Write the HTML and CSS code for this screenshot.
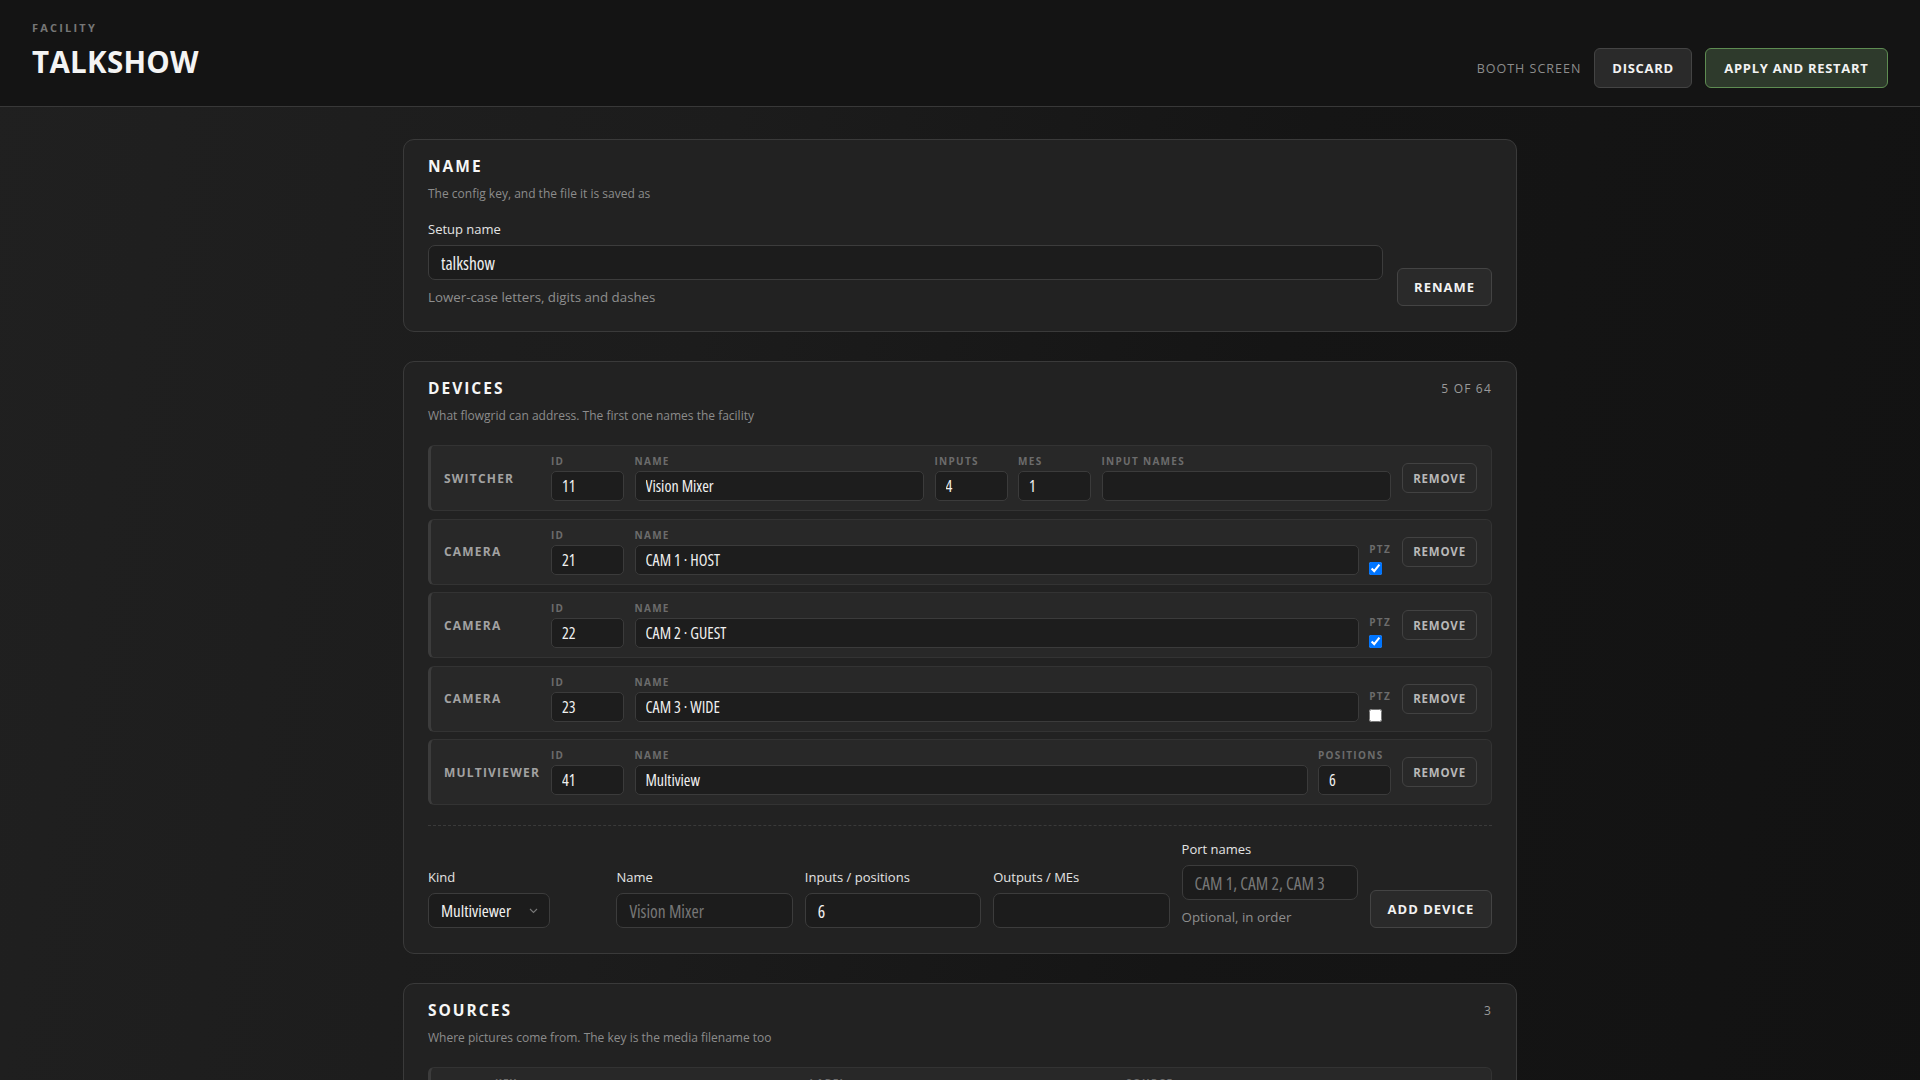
FILE: index.html
```html
<!DOCTYPE html>
<html lang="en">
<head>
<meta charset="utf-8">
<title>Talkshow — Facility</title>
<link rel="stylesheet" href="styles.css">
</head>
<body>
<header class="topbar">
  <div class="brand">
    <div class="eyebrow">FACILITY</div>
    <h1 class="title">TALKSHOW</h1>
  </div>
  <div class="actions">
    <span class="booth">BOOTH SCREEN</span>
    <button class="btn btn-lg">DISCARD</button>
    <button class="btn btn-lg btn-primary">APPLY AND RESTART</button>
  </div>
</header>

<main class="content">
  <section class="card">
    <div class="card-head"><h2 class="card-title">NAME</h2></div>
    <p class="card-sub">The config key, and the file it is saved as</p>
    <div class="rename">
      <div class="field grow">
        <label class="flabel">Setup name</label>
        <input class="input" value="talkshow">
        <div class="hint">Lower-case letters, digits and dashes</div>
      </div>
      <button class="btn btn-md">RENAME</button>
    </div>
  </section>

  <section class="card">
    <div class="card-head"><h2 class="card-title">DEVICES</h2><span class="count">5 OF 64</span></div>
    <p class="card-sub">What flowgrid can address. The first one names the facility</p>
    <div class="dev-list">
      <div class="dev">
        <div class="dev-kind">SWITCHER</div>
        <div class="dev-fields">
          <div class="df sm"><span class="dl">ID</span><input class="input in-sm" value="11"></div>
          <div class="df grow"><span class="dl">NAME</span><input class="input in-sm" value="Vision Mixer"></div>
          <div class="df sm"><span class="dl">INPUTS</span><input class="input in-sm" value="4"></div>
          <div class="df sm"><span class="dl">MES</span><input class="input in-sm" value="1"></div>
          <div class="df grow"><span class="dl">INPUT NAMES</span><input class="input in-sm" value=""></div>
        </div>
        <button class="btn btn-sm">REMOVE</button>
      </div>
      <div class="dev">
        <div class="dev-kind">CAMERA</div>
        <div class="dev-fields">
          <div class="df sm"><span class="dl">ID</span><input class="input in-sm" value="21"></div>
          <div class="df grow"><span class="dl">NAME</span><input class="input in-sm" value="CAM 1 · HOST"></div>
          <div class="df check"><span class="dl">PTZ</span><input type="checkbox" class="cb" checked></div>
        </div>
        <button class="btn btn-sm">REMOVE</button>
      </div>
      <div class="dev">
        <div class="dev-kind">CAMERA</div>
        <div class="dev-fields">
          <div class="df sm"><span class="dl">ID</span><input class="input in-sm" value="22"></div>
          <div class="df grow"><span class="dl">NAME</span><input class="input in-sm" value="CAM 2 · GUEST"></div>
          <div class="df check"><span class="dl">PTZ</span><input type="checkbox" class="cb" checked></div>
        </div>
        <button class="btn btn-sm">REMOVE</button>
      </div>
      <div class="dev">
        <div class="dev-kind">CAMERA</div>
        <div class="dev-fields">
          <div class="df sm"><span class="dl">ID</span><input class="input in-sm" value="23"></div>
          <div class="df grow"><span class="dl">NAME</span><input class="input in-sm" value="CAM 3 · WIDE"></div>
          <div class="df check"><span class="dl">PTZ</span><input type="checkbox" class="cb"></div>
        </div>
        <button class="btn btn-sm">REMOVE</button>
      </div>
      <div class="dev">
        <div class="dev-kind">MULTIVIEWER</div>
        <div class="dev-fields">
          <div class="df sm"><span class="dl">ID</span><input class="input in-sm" value="41"></div>
          <div class="df grow"><span class="dl">NAME</span><input class="input in-sm" value="Multiview"></div>
          <div class="df sm"><span class="dl">POSITIONS</span><input class="input in-sm" value="6"></div>
        </div>
        <button class="btn btn-sm">REMOVE</button>
      </div>
    </div>

    <div class="add">
      <div class="field">
        <label class="flabel">Kind</label>
        <div class="select"><span>Multiviewer</span>
          <svg class="chev" width="9" height="6" viewBox="0 0 9 6"><path d="M1 1 L4.5 4.5 L8 1" fill="none" stroke="#777" stroke-width="1.1"/></svg>
        </div>
      </div>
      <div class="field">
        <label class="flabel">Name</label>
        <input class="input" placeholder="Vision Mixer">
      </div>
      <div class="field">
        <label class="flabel">Inputs / positions</label>
        <input class="input" value="6">
      </div>
      <div class="field">
        <label class="flabel">Outputs / MEs</label>
        <input class="input" value="">
      </div>
      <div class="field">
        <label class="flabel">Port names</label>
        <input class="input" placeholder="CAM 1, CAM 2, CAM 3">
        <div class="hint hint-add">Optional, in order</div>
      </div>
      <button class="btn btn-md btn-add">ADD DEVICE</button>
    </div>
  </section>

  <section class="card">
    <div class="card-head"><h2 class="card-title">SOURCES</h2><span class="count">3</span></div>
    <p class="card-sub">Where pictures come from. The key is the media filename too</p>
    <div class="dev-list">
      <div class="dev src">
        <div class="dev-kind">1</div>
        <div class="dev-fields">
          <div class="df key"><span class="dl">KEY</span><input class="input in-sm" value="cam1"></div>
          <div class="df label"><span class="dl">LABEL</span><input class="input in-sm" value="Host"></div>
          <div class="df grow"><span class="dl">SOURCE</span><input class="input in-sm" value="CAM 1 · HOST"></div>
        </div>
        <button class="btn btn-sm">REMOVE</button>
      </div>
      <div class="dev src">
        <div class="dev-kind">2</div>
        <div class="dev-fields">
          <div class="df key"><span class="dl">KEY</span><input class="input in-sm" value="cam2"></div>
          <div class="df label"><span class="dl">LABEL</span><input class="input in-sm" value="Guest"></div>
          <div class="df grow"><span class="dl">SOURCE</span><input class="input in-sm" value="CAM 2 · GUEST"></div>
        </div>
        <button class="btn btn-sm">REMOVE</button>
      </div>
      <div class="dev src">
        <div class="dev-kind">3</div>
        <div class="dev-fields">
          <div class="df key"><span class="dl">KEY</span><input class="input in-sm" value="cam3"></div>
          <div class="df label"><span class="dl">LABEL</span><input class="input in-sm" value="Wide"></div>
          <div class="df grow"><span class="dl">SOURCE</span><input class="input in-sm" value="CAM 3 · WIDE"></div>
        </div>
        <button class="btn btn-sm">REMOVE</button>
      </div>
    </div>
  </section>
</main>
</body>
</html>
```

FILE: styles.css
```css
* { box-sizing: border-box; }

html, body {
  margin: 0;
  padding: 0;
}

body {
  font-family: "Open Sans", "Noto Sans", "DejaVu Sans", sans-serif;
  color: #e6e6e6;
  background: linear-gradient(100deg, #202020 0%, #1c1c1c 35%, #151515 62%, #121212 100%);
  min-height: 100vh;
}

button, input {
  font-family: inherit;
}

/* ---------- top bar ---------- */
.topbar {
  height: 107px;
  display: flex;
  justify-content: space-between;
  padding: 21px 32px 18px;
  background: #141414;
  border-bottom: 1px solid #383838;
}

.brand {
  display: flex;
  flex-direction: column;
}

.eyebrow {
  font-size: 11px;
  line-height: 14px;
  font-weight: 700;
  letter-spacing: 2.2px;
  color: #767676;
}

.title {
  margin: 10px 0 0;
  font-size: 29.5px;
  line-height: 34px;
  font-weight: 700;
  letter-spacing: 0.3px;
  color: #f4f4f4;
}

.actions {
  align-self: flex-end;
  display: flex;
  align-items: center;
  gap: 13px;
}

.booth {
  font-size: 12.5px;
  letter-spacing: 1px;
  color: #8c8c8c;
}

/* ---------- buttons ---------- */
.btn {
  display: inline-flex;
  align-items: center;
  justify-content: center;
  white-space: nowrap;
  background: #2a2a2a;
  border: 1px solid #444;
  border-radius: 6px;
  color: #f2f2f2;
  font-weight: 700;
  letter-spacing: 1px;
  cursor: pointer;
}

.btn-lg {
  height: 40px;
  padding: 0 17px;
  font-size: 13px;
  letter-spacing: 0.7px;
}

.btn-primary {
  padding: 0 18.5px;
  background: #2e3a2c;
  border-color: #5e8c52;
}

.btn-md {
  height: 38px;
  padding: 0 16px;
  font-size: 13px;
}

.btn-sm {
  height: 30px;
  width: 75px;
  padding: 0;
  font-size: 11.5px;
  letter-spacing: 0.8px;
  color: #b8b8b8;
  background: #292929;
  border-color: #424242;
}

/* ---------- content ---------- */
.content {
  width: 1114px;
  margin: 0 auto;
  padding: 32px 0 48px;
  display: flex;
  flex-direction: column;
  gap: 29px;
}

.card {
  background: #222222;
  border: 1px solid #3a3a3a;
  border-radius: 11px;
  padding: 16px 24px 25px;
}

.card-head {
  display: flex;
  justify-content: space-between;
  align-items: center;
}

.card-title {
  margin: 0;
  font-size: 15.5px;
  line-height: 20px;
  font-weight: 700;
  letter-spacing: 2px;
  color: #f6f6f6;
}

.count {
  font-size: 12px;
  letter-spacing: 1.2px;
  color: #9a9a9a;
}

.card-sub {
  margin: 10px 0 21px;
  font-size: 12px;
  line-height: 16px;
  color: #8c8c8c;
}

/* ---------- generic fields ---------- */
.field {
  display: flex;
  flex-direction: column;
  min-width: 0;
}

.grow { flex: 1 1 0; min-width: 0; }

.flabel {
  font-size: 13px;
  line-height: 18px;
  color: #e4e4e4;
  margin-bottom: 7px;
}

.input {
  width: 100%;
  height: 35px;
  padding: 0 12px;
  background: #1c1c1c;
  border: 1px solid #3c3c3c;
  border-radius: 7px;
  color: #f0f0f0;
  font-size: 17.5px;
  font-stretch: 75%;
  outline: none;
}

.input::placeholder {
  color: #777;
}

.hint {
  margin-top: 8px;
  font-size: 13.3px;
  line-height: 18px;
  color: #8e8e8e;
}

.rename {
  display: flex;
  align-items: flex-end;
  gap: 14px;
  margin-top: -3px;
}

/* ---------- device rows ---------- */
.dev-list {
  display: flex;
  flex-direction: column;
  gap: 7.5px;
}

.dev {
  display: grid;
  grid-template-columns: 96px 1fr auto;
  column-gap: 11px;
  align-items: center;
  padding: 9px 14px 9px 13px;
  background: #282828;
  border: 1px solid #333;
  border-left: 3px solid #3c3c3c;
  border-radius: 6px;
}

.dev-kind {
  font-size: 12px;
  font-weight: 700;
  letter-spacing: 1.2px;
  color: #a2a2a2;
  white-space: nowrap;
}

.dev-fields {
  display: flex;
  align-items: flex-end;
  gap: 10.5px;
}

.df {
  display: flex;
  flex-direction: column;
}

.df.sm { width: 73px; flex: none; }
.df.check { flex: none; align-items: flex-start; }

.dl {
  font-size: 10px;
  line-height: 12px;
  font-weight: 700;
  letter-spacing: 1.3px;
  color: #6c6c6c;
  margin-bottom: 4px;
  white-space: nowrap;
}

.df.check .dl { margin-bottom: 7px; }

.in-sm {
  height: 30px;
  padding: 0 10px;
  font-size: 16px;
  border-radius: 5px;
  background: #1d1d1d;
  border-color: #3b3b3b;
}

.cb {
  width: 13px;
  height: 13px;
  margin: 0;
}

/* ---------- add device form ---------- */
.add {
  margin-top: 20px;
  padding-top: 14px;
  border-top: 1px dashed #3a3a3a;
  display: grid;
  grid-template-columns: repeat(5, 1fr) auto;
  gap: 12px;
  align-items: end;
}

.hint-add {
  margin-top: 8px;
  margin-bottom: 2px;
}

.select {
  align-self: flex-start;
  width: 122px;
  height: 35px;
  display: flex;
  align-items: center;
  justify-content: space-between;
  padding: 0 11px 0 12px;
  background: #1c1c1c;
  border: 1px solid #3c3c3c;
  border-radius: 7px;
  color: #f0f0f0;
  font-size: 17px;
  font-stretch: 75%;
}

.chev { flex: none; }

.btn-add { width: 122px; }

/* ---------- sources ---------- */
.dev.src {
  grid-template-columns: 40px 1fr auto;
}

.dev.src .dev-kind {
  color: #777;
}

.df.key { width: 304px; flex: none; }
.df.label { width: 306px; flex: none; }
```
